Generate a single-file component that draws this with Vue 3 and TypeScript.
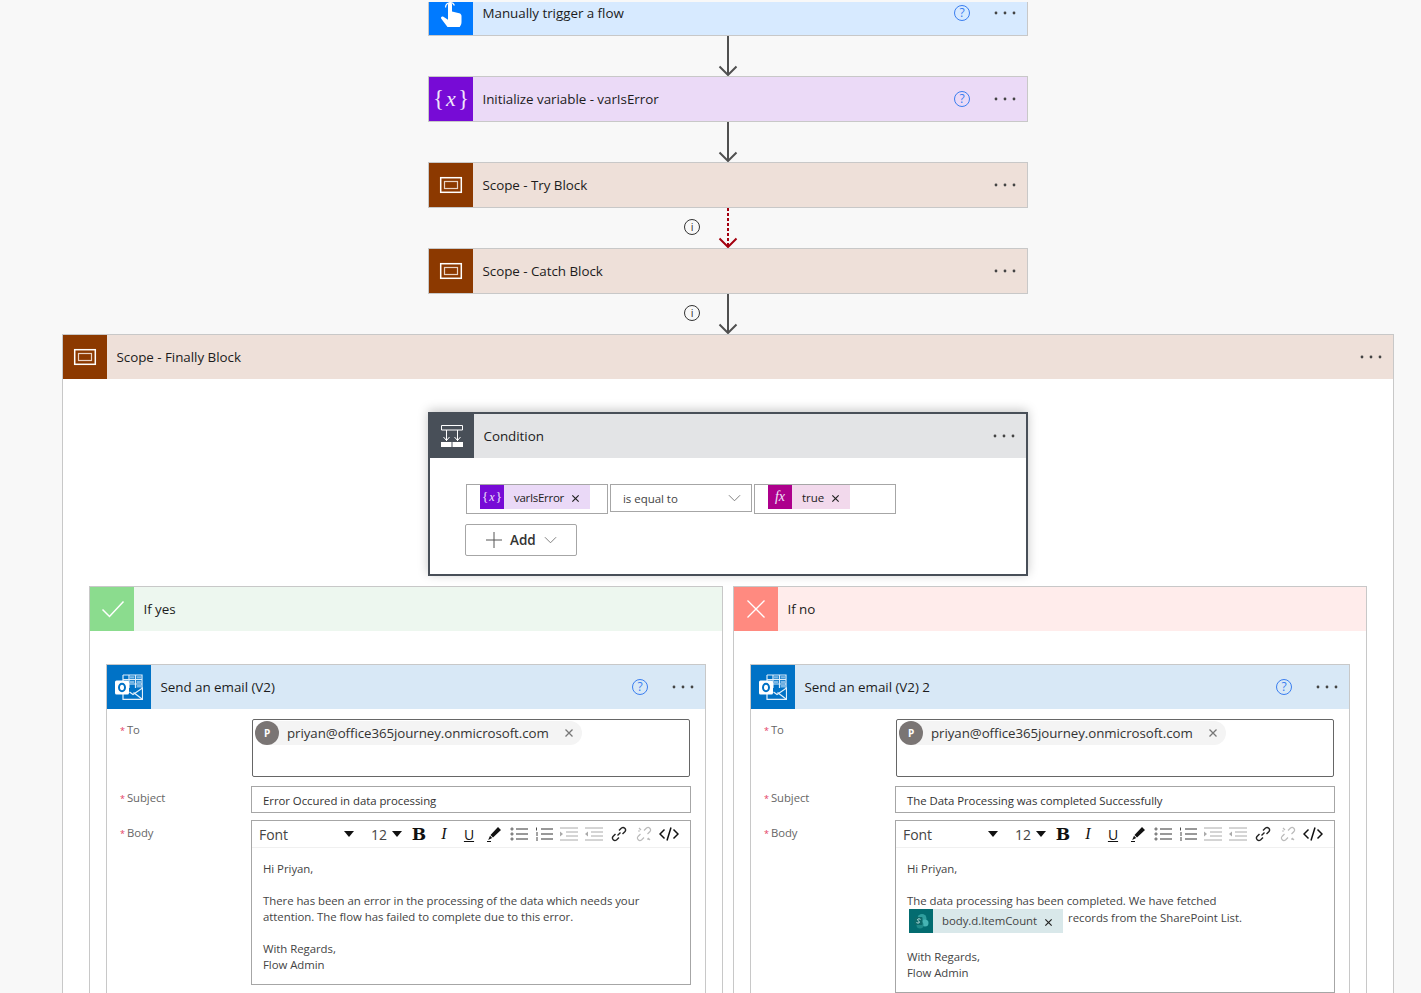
<script setup lang="ts">
interface Branch {
  kind: 'yes' | 'no'
  label: string
  title: string
  subject: string
}
const branches: Branch[] = [
  { kind: 'yes', label: 'If yes', title: 'Send an email (V2)', subject: 'Error Occured in data processing' },
  { kind: 'no', label: 'If no', title: 'Send an email (V2) 2', subject: 'The Data Processing was completed Successfully' }
]
const tools = ['bold', 'italic', 'under', 'pen', 'bul', 'num', 'ind', 'out', 'link', 'unlink', 'code']
</script>

<template>
  <div class="page">
    <svg class="defs" aria-hidden="true">
      <symbol id="dots" viewBox="0 0 24 4">
        <circle cx="3" cy="2" r="1.4" /><circle cx="12" cy="2" r="1.4" /><circle cx="21" cy="2" r="1.4" />
      </symbol>
      <symbol id="scope" viewBox="0 0 24 18">
        <rect x="1.7" y="1.7" width="20.6" height="14.6" fill="none" stroke="#fff" stroke-width="1.5" />
        <rect x="5.5" y="5.5" width="13" height="7" fill="none" stroke="#e9d3c5" stroke-width="1.2" />
      </symbol>
      <symbol id="arrow" viewBox="0 0 20 40">
        <path d="M10 0V39M1.500 30.500 10 39l8.500-8.500" fill="none" stroke="#505050" stroke-width="2" />
      </symbol>
      <symbol id="arrow-red" viewBox="0 0 20 40">
        <path d="M10 0V38" fill="none" stroke="#a4000f" stroke-width="2" stroke-dasharray="3 2" />
        <path d="M1.500 30.500 10 39l8.500-8.500" fill="none" stroke="#a4000f" stroke-width="2" />
      </symbol>
      <symbol id="outlook" viewBox="0 0 28 26">
        <path d="M8 1h19v14M8 1v6M14 1v13M20.500 1v13M8 5.500h19M14 10h13" fill="none" stroke="#dcecf9" stroke-width="1.200" />
        <path d="M15 2.200h4.300v2.200H15zM21.700 2.200H26v2.200h-4.300zM15 6.700h4.300v2.200H15zM21.700 6.700H26v2.200h-4.300zM21.700 11H26v2.500h-4.300z" fill="#7db9e6" />
        <path d="M8 14v11.300h19.500V14L18 20.500 14.500 18" fill="none" stroke="#e3f0fa" stroke-width="1.200" />
        <path d="M27 25 18.500 18.500" fill="none" stroke="#e3f0fa" stroke-width="1.200" />
        <rect x="0" y="6.500" width="14" height="14" rx="1.500" fill="#fff" />
        <ellipse cx="7" cy="13.500" rx="3" ry="3.800" fill="none" stroke="#0072c6" stroke-width="2" />
      </symbol>
      <symbol id="chev" viewBox="0 0 14 8">
        <path d="M1 1l6 6 6-6" fill="none" stroke="currentColor" stroke-width="1" />
      </symbol>
      <symbol id="close" viewBox="0 0 10 10">
        <path d="M1.500 1.500l7 7M8.500 1.500l-7 7" fill="none" stroke="currentColor" stroke-width="1.300" />
      </symbol>
    </svg>

    <div class="flow">
      <div class="clip">
        <div class="card trigger clipped">
          <div class="tile">
            <svg class="hand" width="24" height="30" viewBox="0 0 24 30">
              <path d="M9 3.500a2 2 0 0 1 4 0v7l7.200 1.800c1.300.3 2.300 1.400 2.300 2.800V21c0 2-.7 3.500-1.800 5H8.500L2.300 17.800c-1-1.300.6-3.100 2.100-2l4.600 3Z" fill="#fff" />
              <path d="M6.600 6.500a4.600 4.600 0 0 1 8.800-2" fill="none" stroke="#fff" stroke-width="1.200" />
            </svg>
          </div>
          <span class="name">Manually trigger a flow</span>
          <span class="help">?</span>
          <svg class="dots"><use href="#dots" /></svg>
        </div>
      </div>
      <div class="link"><svg class="arrow"><use href="#arrow" /></svg></div>

      <div class="card variable">
        <div class="tile var-glyph">{<i>x</i>}</div>
        <span class="name">Initialize variable - varIsError</span>
        <span class="help">?</span>
        <svg class="dots"><use href="#dots" /></svg>
      </div>
      <div class="link"><svg class="arrow"><use href="#arrow" /></svg></div>

      <div class="card brown">
        <div class="tile"><svg class="scope-icon"><use href="#scope" /></svg></div>
        <span class="name">Scope - Try Block</span>
        <svg class="dots"><use href="#dots" /></svg>
      </div>
      <div class="link">
        <span class="info">i</span>
        <svg class="arrow"><use href="#arrow-red" /></svg>
      </div>

      <div class="card brown">
        <div class="tile"><svg class="scope-icon"><use href="#scope" /></svg></div>
        <span class="name">Scope - Catch Block</span>
        <svg class="dots"><use href="#dots" /></svg>
      </div>
      <div class="link">
        <span class="info">i</span>
        <svg class="arrow"><use href="#arrow" /></svg>
      </div>

      <section class="finally">
        <header class="card brown wide">
          <div class="tile"><svg class="scope-icon"><use href="#scope" /></svg></div>
          <span class="name">Scope - Finally Block</span>
          <svg class="dots"><use href="#dots" /></svg>
        </header>

        <div class="condition">
          <div class="cond-head">
            <div class="tile cond-tile">
              <svg width="24" height="24" viewBox="0 0 24 24">
                <path d="M1.500 1.500h21v4.500h-21zM6.500 6v11M17.500 6v11M3.500 13l3 3.500 3-3.500M14.500 13l3 3.500 3-3.500" fill="none" stroke="#fff" stroke-width="1" />
                <path d="M1 18h10.500v5H1zM12.500 18H23v5H12.500z" fill="#fff" />
              </svg>
            </div>
            <span class="name">Condition</span>
            <svg class="dots"><use href="#dots" /></svg>
          </div>
          <div class="cond-body">
            <div class="cond-row">
              <div class="cond-input">
                <span class="token purple"><i class="tok-icon small-var">{<b>x</b>}</i><span class="tok-text">varIsError</span><svg class="tok-x"><use href="#close" /></svg></span>
              </div>
              <div class="cond-select">
                <span>is equal to</span>
                <svg class="sel-chev"><use href="#chev" /></svg>
              </div>
              <div class="cond-input">
                <span class="token pink"><i class="tok-icon fx">fx</i><span class="tok-text">true</span><svg class="tok-x"><use href="#close" /></svg></span>
              </div>
            </div>
            <button class="add" type="button">
              <svg width="16" height="16" viewBox="0 0 16 16"><path d="M0 8h16M8 0v16" stroke="#555" stroke-width="1" /></svg>
              <span>Add</span>
              <svg class="add-chev"><use href="#chev" /></svg>
            </button>
          </div>
        </div>

        <div class="branches">
          <section v-for="b in branches" :key="b.kind" class="branch">
            <header class="branch-head" :class="b.kind">
              <div class="tile">
                <svg v-if="b.kind === 'yes'" class="tick" width="24" height="18" viewBox="0 0 24 18"><path d="M1.500 9.500 8.500 16.500 22.500 1.500" fill="none" stroke="#fff" stroke-width="1.500" /></svg>
                <svg v-else width="20" height="20" viewBox="0 0 20 20"><path d="M1.500 1.500l17 17M18.500 1.500l-17 17" fill="none" stroke="#fff" stroke-width="1.300" /></svg>
              </div>
              <span class="name">{{ b.label }}</span>
            </header>

            <div class="mail">
              <div class="card outlook">
                <div class="tile"><svg class="outlook-icon"><use href="#outlook" /></svg></div>
                <span class="name">{{ b.title }}</span>
                <span class="help">?</span>
                <svg class="dots"><use href="#dots" /></svg>
              </div>
              <div class="fields">
                <label class="lab lab-to"><em>*</em>To</label>
                <div class="to-box">
                  <span class="person">
                    <span class="avatar">P</span>
                    <span class="addr">priyan@office365journey.onmicrosoft.com</span>
                    <svg class="person-x"><use href="#close" /></svg>
                  </span>
                </div>

                <label class="lab lab-subject"><em>*</em>Subject</label>
                <div class="subject">{{ b.subject }}</div>

                <label class="lab lab-body"><em>*</em>Body</label>
                <div class="editor">
                  <div class="toolbar">
                    <span class="select font">Font<i class="caret"></i></span>
                    <span class="select size">12<i class="caret"></i></span>
                    <span v-for="t in tools" :key="t" class="tool" :class="t">
                      <b v-if="t === 'bold'">B</b>
                      <i v-else-if="t === 'italic'">I</i>
                      <u v-else-if="t === 'under'">U</u>
                      <svg v-else-if="t === 'pen'" width="16" height="16" viewBox="0 0 16 16"><path d="M12 1 15 4 7 11.500 4.500 9ZM4 9.800l2.200 2.200-4 2Z" fill="#111" /><path d="M1 15.500h4" stroke="#111" /></svg>
                      <svg v-else-if="t === 'bul'" width="18" height="16" viewBox="0 0 18 16"><path d="M6 3h12M6 8h12M6 13h12" stroke="#333" stroke-width="1" /><circle cx="2" cy="3" r="1.100" fill="none" stroke="#333" stroke-width=".8" /><circle cx="2" cy="8" r="1.100" fill="none" stroke="#333" stroke-width=".8" /><circle cx="2" cy="13" r="1.100" fill="none" stroke="#333" stroke-width=".8" /></svg>
                      <svg v-else-if="t === 'num'" width="18" height="16" viewBox="0 0 18 16"><path d="M6 3h12M6 8h12M6 13h12" stroke="#333" stroke-width="1" /><path d="M1.500 1.500v3M1 7h2M1 9h2M1 12h2M1 14h2" fill="none" stroke="#333" stroke-width=".9" /></svg>
                      <svg v-else-if="t === 'ind'" width="18" height="14" viewBox="0 0 18 14"><path d="M0 1h18M6 5h12M6 9h12M0 13h18" stroke="#aaa" /><path d="M0 4.500 3 7 0 9.500Z" fill="#aaa" /></svg>
                      <svg v-else-if="t === 'out'" width="18" height="14" viewBox="0 0 18 14"><path d="M0 1h18M6 5h12M6 9h12M0 13h18" stroke="#aaa" /><path d="M3 4.500 0 7l3 2.500Z" fill="#aaa" /></svg>
                      <svg v-else-if="t === 'link'" width="16" height="16" viewBox="0 0 16 16"><path d="M6.500 9.500 9.500 6.500M8 4.500l2.500-2.500a2.500 2.500 0 0 1 3.500 3.500L11.500 8M8 11.500 5.500 14A2.500 2.500 0 0 1 2 10.500L4.500 8" fill="none" stroke="#222" stroke-width="1.400" /></svg>
                      <svg v-else-if="t === 'unlink'" width="16" height="16" viewBox="0 0 16 16"><path d="M8 4.500l2.500-2.500a2.500 2.500 0 0 1 3.500 3.500L11.500 8M8 11.500 5.500 14A2.500 2.500 0 0 1 2 10.500L4.500 8M3 2l2 2M2 5h2M12 12l2 2M12 14v-2" fill="none" stroke="#bbb" stroke-width="1.200" /></svg>
                      <svg v-else width="20" height="14" viewBox="0 0 20 14"><path d="M5.500 2.500 1 7l4.500 4.500M14.500 2.500 19 7l-4.500 4.500M12 .5 8 13.500" fill="none" stroke="#111" stroke-width="1.500" /></svg>
                    </span>
                  </div>
                  <div v-if="b.kind === 'yes'" class="content">
                    <p>Hi Priyan,</p>
                    <p class="blank"></p>
                    <p>There has been an error in the processing of the data which needs your</p>
                    <p>attention. The flow has failed to complete due to this error.</p>
                    <p class="blank"></p>
                    <p>With Regards,</p>
                    <p>Flow Admin</p>
                  </div>
                  <div v-else class="content">
                    <p>Hi Priyan,</p>
                    <p class="blank"></p>
                    <p>The data processing has been completed. We have fetched</p>
                    <div class="chip-line">
                      <span class="sp-chip">
                        <span class="sp-icon">
                          <svg width="18" height="18" viewBox="0 0 18 18">
                            <circle cx="10" cy="6.500" r="4.500" fill="#2f9e9e" /><circle cx="13" cy="11" r="3.500" fill="#46b4b4" /><circle cx="8" cy="13" r="3.500" fill="#1f8a8a" />
                            <rect x="2.500" y="5" width="8" height="8" rx="1" fill="#0d6a6a" />
                            <path d="M8.500 7.300C6 6 4.500 7.800 6.500 9c2 1 .5 2.800-2 1.600" fill="none" stroke="#cfeaea" />
                          </svg>
                        </span>
                        <span class="sp-text">body.d.ItemCount</span>
                        <svg class="tok-x"><use href="#close" /></svg>
                      </span>
                      <span class="sp-after">records from the SharePoint List.</span>
                    </div>
                    <p class="blank"></p>
                    <p>With Regards,</p>
                    <p>Flow Admin</p>
                  </div>
                </div>
              </div>
            </div>
          </section>
        </div>
      </section>
    </div>
  </div>
</template>

<style>
html, body { margin: 0; background: #f8f8f8; overflow: hidden; }
</style>

<style scoped>
.page {
  height: 993px;
  overflow: hidden;
  background: #f8f8f8;
  font-family: "Open Sans", "Noto Sans", sans-serif;
  color: #1c1c1c;
  font-size: 13.4px;
  letter-spacing: -0.04px;
}
.defs { position: absolute; width: 0; height: 0; }
.flow {
  width: 1332px;
  margin-left: 62px;
  padding-top: 2px;
  display: flex;
  flex-direction: column;
  align-items: center;
}
.clip { width: 600px; height: 34px; overflow: hidden; }
.clipped { margin-top: -12px; }
.hand { margin-top: 6px; }

.card {
  box-sizing: border-box;
  width: 600px;
  height: 46px;
  flex: none;
  border: 1px solid #c8c8c8;
  display: flex;
  align-items: center;
}
.tile {
  width: 44px;
  height: 44px;
  flex: none;
  display: flex;
  align-items: center;
  justify-content: center;
}
.name { margin-left: 9.5px; flex: 1; }
.trigger { background: #d7eaff; border-top: none; height: 46px; }
.trigger .tile { background: #007aff; }
.variable { background: #ebdaf7; }
.variable .tile { background: #770bd6; }
.brown { background: #eee0d9; }
.brown .tile { background: #8c3900; }
.outlook { background: #d8e8f6; height: 45px; border-bottom: none; }
.outlook .tile { background: #0072c6; }

.var-glyph {
  color: #f1e6fb;
  font-family: "Liberation Serif", serif;
  font-size: 23px;
  letter-spacing: 0;
}
.var-glyph i { margin: 0 2px; font-size: 22px; }

.scope-icon { width: 24px; height: 18px; }
.outlook-icon { width: 28px; height: 26px; }
.tick { margin-left: 1px; }

.help {
  box-sizing: border-box;
  width: 16px;
  height: 16px;
  border: 1px solid #3a7ef0;
  border-radius: 50%;
  color: #3a7ef0;
  font-size: 12px;
  line-height: 13px;
  text-align: center;
  margin-right: 23px;
}
.dots { width: 24px; height: 4px; margin-right: 10px; fill: #444; }

.link {
  position: relative;
  width: 600px;
  height: 40px;
  flex: none;
  display: flex;
  justify-content: center;
}
.arrow { width: 20px; height: 40px; }
.info {
  position: absolute;
  left: 256px;
  top: 11px;
  box-sizing: border-box;
  width: 16px;
  height: 16px;
  border: 1px solid #333;
  border-radius: 50%;
  font-size: 11px;
  line-height: 14px;
  text-align: center;
  color: #333;
}

.finally {
  box-sizing: border-box;
  width: 1332px;
  background: #fff;
  border: 1px solid #c8c8c8;
  display: flex;
  flex-direction: column;
  align-items: center;
}
.wide {
  width: 100%;
  height: 44px;
  border: none;
}

.condition {
  box-sizing: border-box;
  width: 600px;
  height: 164px;
  margin-top: 33px;
  border: 2px solid #484f58;
  background: #fff;
  box-shadow: 0 -2px 10px rgba(0, 0, 0, 0.22);
  flex: none;
}
.cond-head {
  height: 44px;
  background: #e3e4e6;
  display: flex;
  align-items: center;
}
.cond-tile { background: #484f58; }
.cond-body { padding: 26px 0 0 36px; font-size: 11.5px; }
.cond-row { display: flex; gap: 2px; align-items: flex-start; }
.cond-input {
  box-sizing: border-box;
  width: 142px;
  height: 30px;
  border: 1px solid #a6a6a6;
  padding-left: 13px;
}
.cond-select {
  box-sizing: border-box;
  width: 142px;
  height: 28px;
  border: 1px solid #a6a6a6;
  padding: 0 10px 0 12px;
  display: flex;
  align-items: center;
  justify-content: space-between;
  color: #444;
}
.sel-chev { width: 13px; height: 8px; color: #777; }
.token {
  display: inline-flex;
  align-items: center;
  height: 24px;
}
.purple { background: #ead9f7; }
.pink { background: #f2d9ec; }
.tok-icon {
  width: 24px;
  height: 24px;
  display: flex;
  align-items: center;
  justify-content: center;
  color: #f1e6fb;
  font-family: "Liberation Serif", serif;
  font-size: 13px;
  letter-spacing: 0;
  font-style: normal;
}
.purple .tok-icon { background: #770bd6; }
.pink .tok-icon { background: #ad008c; font-style: italic; font-size: 14px; }
.purple .tok-text { letter-spacing: -0.3px; }
.small-var b { font-weight: normal; font-style: italic; font-size: 12px; margin: 0 1px; }
.tok-text { margin-left: 10px; color: #222; }
.tok-x { width: 9px; height: 9px; margin: 2px 10px 0 7px; color: #222; }
.add {
  box-sizing: border-box;
  width: 112px;
  height: 32px;
  margin: 10px 0 0 -1px;
  padding: 0 0 0 20px;
  display: flex;
  align-items: center;
  background: #fff;
  border: 1px solid #a6a6a6;
  border-radius: 2px;
  font-family: inherit;
  font-size: 13.5px;
  font-weight: 600;
  color: #333;
  letter-spacing: -0.05px;
}
.add span { margin-left: 8px; }
.add-chev { width: 13px; height: 8px; margin-left: 8px; color: #777; }

.branches {
  display: flex;
  gap: 10px;
  margin-top: 10px;
  align-items: flex-start;
}
.branch {
  box-sizing: border-box;
  width: 634px;
  height: 500px;
  background: #fff;
  border: 1px solid #c8c8c8;
}
.branch-head { height: 44px; display: flex; align-items: center; }
.branch-head.yes { background: #edf7ef; }
.branch-head.yes .tile { background: #8bdc8e; }
.branch-head.no { background: #ffeceb; }
.branch-head.no .tile { background: #ff8a80; }

.mail { width: 600px; margin: 33px 0 0 16px; background: #fff; border: 1px solid #c8c8c8; border-width: 0 1px; box-sizing: border-box; }
.mail .card { margin-left: -1px; }

.fields {
  display: grid;
  grid-template-columns: 131px 440px;
  padding: 10px 0 40px 13px;
  row-gap: 7px;
}
.lab { font-size: 11.3px; color: #666; display: block; }
.lab em { color: #e4405f; font-style: normal; font-size: 9px; margin-right: 2px; }
.lab-to { padding-top: 3px; }
.lab-subject { padding-top: 4px; }
.lab-body { padding-top: 5px; }
.to-box {
  box-sizing: border-box;
  width: 438px;
  height: 58px;
  margin: 0 1px 2px;
  border: 1px solid #666;
  border-radius: 2px;
  padding: 1px 2px;
}
.person {
  display: inline-flex;
  align-items: center;
  height: 24px;
  border-radius: 12px;
  background: #f4f4f4;
}
.avatar {
  width: 24px;
  height: 24px;
  border-radius: 50%;
  background: #7a7574;
  color: #fff;
  font-size: 10px;
  font-weight: 700;
  line-height: 24px;
  text-align: center;
}
.addr { margin: -1px 0 0 8px; font-size: 13.3px; color: #333; white-space: nowrap; letter-spacing: -0.06px; }
.person-x { width: 10px; height: 10px; margin: 0 8px 0 15px; color: #777; }
.subject {
  box-sizing: border-box;
  height: 27px;
  border: 1px solid #a6a6a6;
  padding: 0 11px;
  line-height: 27px;
  font-size: 11.4px;
  color: #333;
}
.editor { box-sizing: border-box; border: 1px solid #a6a6a6; }
.toolbar {
  height: 27px;
  box-sizing: border-box;
  border-bottom: 1px solid #f0f0f0;
  display: flex;
  align-items: center;
  padding-left: 1px;
  gap: 1px;
}
.select {
  display: flex;
  align-items: center;
  justify-content: space-between;
  box-sizing: border-box;
  height: 24px;
  font-size: 14px;
  color: #444;
  padding: 0 10px 0 6px;
}
.font { width: 111px; margin-right: 1px; }
.size { width: 40px; padding: 0 4px 0 5px; }
.caret { border: 5px solid transparent; border-top: 6px solid #111; border-bottom: 0; }
.tool {
  width: 24px;
  height: 24px;
  display: flex;
  align-items: center;
  justify-content: center;
  color: #111;
}
.bold { font-family: "DejaVu Serif", serif; font-size: 17px; }
.italic { font-family: "Liberation Serif", serif; font-size: 16px; }
.under { font-size: 14px; }
.content { padding: 13px 11px 11px; font-size: 11.4px; line-height: 16px; color: #444; }
.content p { margin: 0; min-height: 16px; white-space: nowrap; }
.chip-line { display: flex; height: 24px; gap: 5px; align-items: flex-start; margin-left: 2px; }
.sp-chip { display: inline-flex; align-items: center; height: 24px; background: #d9e8ea; }
.sp-icon { width: 24px; height: 24px; background: #036c70; display: flex; align-items: center; justify-content: center; }
.sp-text { margin-left: 9px; }
.sp-after { margin-top: 1px; }
</style>
